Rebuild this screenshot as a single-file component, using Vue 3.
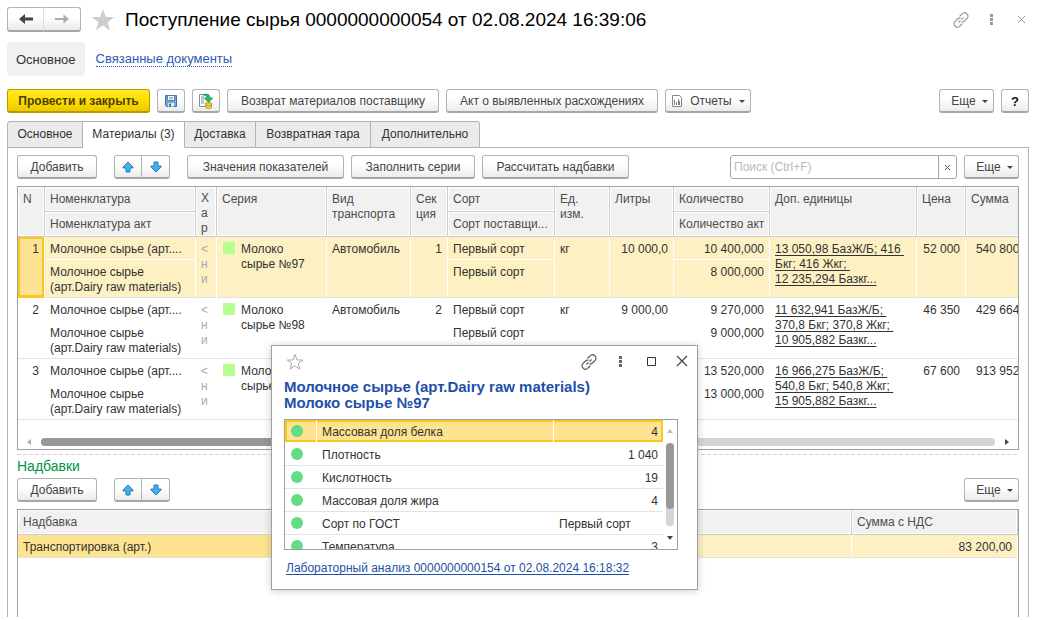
<script setup>
import { ref } from 'vue'

const activeTab = ref(1)
const search = ref('')
const tabs = ['Основное', 'Материалы (3)', 'Доставка', 'Возвратная тара', 'Дополнительно']

const materials = [
  {
    n: 1, short: 'Молочное сырье (арт....', series: 'Молоко сырье №97', section: 1,
    litres: '10 000,0', qty: '10 400,000', qtyAct: '8 000,000',
    extra: ['13 050,98 БазЖ/Б; 416', 'Бкг; 416 Жкг;', '12 235,294 Базкг...'],
    price: '52 000', sum: '540 800,00'
  },
  {
    n: 2, short: 'Молочное сырье (арт....', series: 'Молоко сырье №98', section: 2,
    litres: '9 000,00', qty: '9 270,000', qtyAct: '9 000,000',
    extra: ['11 632,941 БазЖ/Б;', '370,8 Бкг; 370,8 Жкг;', '10 905,882 Базкг...'],
    price: '46 350', sum: '429 664,50'
  },
  {
    n: 3, short: 'Молочное сырье (арт....', series: 'Молоко сырье №99', section: 3,
    litres: '13 000,0', qty: '13 520,000', qtyAct: '13 000,000',
    extra: ['16 966,275 БазЖ/Б;', '540,8 Бкг; 540,8 Жкг;', '15 905,882 Базкг...'],
    price: '67 600', sum: '913 952,00'
  }
]

const analysis = [
  { name: 'Массовая доля белка', value: '4' },
  { name: 'Плотность', value: '1 040' },
  { name: 'Кислотность', value: '19' },
  { name: 'Массовая доля жира', value: '4' },
  { name: 'Сорт по ГОСТ', value: 'Первый сорт', text: true },
  { name: 'Температура', value: '3' }
]
</script>

<template>
  <main class="app">
    <header class="title-row">
      <div class="pair nav">
        <button class="btn" aria-label="Назад">
          <svg width="16" height="12" viewBox="0 0 16 12"><path d="M1 6 7 1v3.500h8v3H7V11z" fill="#444" /></svg>
        </button>
        <button class="btn" aria-label="Вперед">
          <svg width="16" height="12" viewBox="0 0 16 12"><path d="M15 6 9.500 1.500v3.500H1v2h8.500v3.500z" fill="#aaa" /></svg>
        </button>
      </div>
      <button class="icon star" aria-label="В избранное">
        <svg width="24" height="24" viewBox="0 0 24 24"><path d="m12 1 2.800 8H23.500l-7 5.200L19.200 22.500 12 17.400 4.800 22.500l2.700-8.300-7-5.200H9.200z" fill="#cbcdcf" /></svg>
      </button>
      <h1>Поступление сырья 0000000000054 от 02.08.2024 16:39:06</h1>
      <div class="window-tools">
        <button class="icon" aria-label="Ссылка">
          <svg width="16" height="16" viewBox="0 0 16 16" fill="none" stroke="#999" stroke-width="1.100"><path d="M6.500 4.500 9 2a3.200 3.200 0 0 1 5 4.500L11.500 9a3.200 3.200 0 0 1-3 .800M9.500 11.500 7 14a3.200 3.200 0 0 1-5-4.500L4.500 7a3.200 3.200 0 0 1 3-.800M5.500 10.500l2-2M8.500 7.500l2-2" /></svg>
        </button>
        <button class="icon" aria-label="Меню">
          <svg width="16" height="16" viewBox="0 0 16 16" fill="#999"><path d="M7 2h3v3H7zM7 6h3v3H7zM7 10h3v3H7z" /></svg>
        </button>
        <button class="icon" aria-label="Закрыть">
          <svg width="16" height="16" viewBox="0 0 16 16" stroke="#999"><path d="m5 4 7 7m0-7-7 7" /></svg>
        </button>
      </div>
    </header>

    <nav class="sections">
      <a href="#" class="current">Основное</a>
      <a href="#" class="related">Связанные документы</a>
    </nav>

    <div class="bar commands">
      <button class="btn primary">Провести и закрыть</button>
      <button class="btn square" aria-label="Записать">
        <svg width="14" height="14" viewBox="0 0 14 14"><path d="M1.500 1.500h11v11h-10l-1-1z" fill="#78a8d8" stroke="#3c6e9f" /><path d="M3.500 1.500h7v5h-7z" fill="#fff" stroke="#5584b2" /><path d="M5 3.500h4M5 5h4" stroke="#88a" stroke-width=".800" /><path d="M4 9h6v3.500H4z" fill="#e9f1f8" /><path d="M5 9.500h2v3H5z" fill="#3c6e9f" /></svg>
      </button>
      <button class="btn square" aria-label="Провести">
        <svg width="16" height="16" viewBox="0 0 16 16"><path d="M1.500 1.500h9v12h-9z" fill="#fff" stroke="#7893a8" /><path d="M3 4h3M3 6h3M3 8h3M3 10h3" stroke="#7893a8" /><path d="M7.500 10h6v4.500c-2 1.300-4 1.300-6 0z" fill="#f1cf4b" stroke="#c59c22" /><path d="M7.500 12c2 1 4 1 6 0" stroke="#c59c22" fill="none" /><path d="M5 2c4-2 7 0 7 3h2.500L10.500 9.500 6.500 5H9c0-2-2-3-4-3z" fill="#22c36a" stroke="#109448" stroke-width=".800" /></svg>
      </button>
      <button class="btn wide">Возврат материалов поставщику</button>
      <button class="btn wide">Акт о выявленных расхождениях</button>
      <button class="btn reports">
        <svg width="12" height="14" viewBox="0 0 12 14"><path d="M1.500 1.500h7l2 2v9h-9z" fill="#fff" stroke="#7b8b99" /><path d="M3.500 6v5" stroke="#d55" /><path d="M5.500 8v3" stroke="#48a" /><path d="M7.500 5v6" stroke="#d55" /><path d="M8.500 7v4" stroke="#4a4" /></svg>
        Отчеты <i class="caret"></i>
      </button>
      <span class="spring"></span>
      <button class="btn more">Еще <i class="caret"></i></button>
      <button class="btn square help">?</button>
    </div>

    <div class="tabs" role="tablist">
      <button v-for="(t, i) in tabs" :key="t" role="tab" :aria-selected="i === activeTab" :class="{ active: i === activeTab }" @click="activeTab = i">{{ t }}</button>
    </div>

    <section class="panel">
      <div class="bar">
        <button class="btn add">Добавить</button>
        <div class="pair arrows">
          <button class="btn" aria-label="Вверх"><svg width="12" height="12" viewBox="0 0 12 12"><path d="M6 1 1 6v1h3v4h4V7h3V6z" fill="#41b0f0" stroke="#2a7cb8" /></svg></button>
          <button class="btn" aria-label="Вниз"><svg width="12" height="12" viewBox="0 0 12 12"><path d="m6 11 5-5V5H8V1H4v4H1v1z" fill="#41b0f0" stroke="#2a7cb8" /></svg></button>
        </div>
        <button class="btn values">Значения показателей</button>
        <button class="btn fill">Заполнить серии</button>
        <button class="btn calc">Рассчитать надбавки</button>
        <span class="spring"></span>
        <div class="search">
          <input v-model="search" type="text" aria-label="Поиск" placeholder="Поиск (Ctrl+F)" />
          <button aria-label="Очистить" @click="search = ''"><svg width="7" height="7" viewBox="0 0 7 7" stroke="#555"><path d="m1 1 5 5m0-5-5 5" /></svg></button>
        </div>
        <button class="btn more">Еще <i class="caret"></i></button>
      </div>

      <div class="grid-box">
        <table class="materials">
          <colgroup>
            <col class="c-n" /><col class="c-name" /><col class="c-char" /><col class="c-series" /><col class="c-transport" />
            <col class="c-section" /><col class="c-grade" /><col class="c-unit" /><col class="c-litres" /><col class="c-qty" />
            <col /><col class="c-price" /><col class="c-sum" />
          </colgroup>
          <thead>
            <tr>
              <th rowspan="2">N</th><th>Номенклатура</th><th rowspan="2" class="char">Хар</th><th rowspan="2">Серия</th>
              <th rowspan="2">Вид транспорта</th><th rowspan="2">Сек<br />ция</th><th>Сорт</th><th rowspan="2">Ед.<br />изм.</th>
              <th rowspan="2">Литры</th><th>Количество</th><th rowspan="2">Доп. единицы</th><th rowspan="2">Цена</th><th rowspan="2">Сумма</th>
            </tr>
            <tr><th>Номенклатура акт</th><th class="tight">Сорт поставщи...</th><th class="tight">Количество акт</th></tr>
          </thead>
          <tbody v-for="m in materials" :key="m.n" :class="{ selected: m.n === 1 }">
            <tr>
              <td rowspan="2" class="num focus">{{ m.n }}</td>
              <td class="top">{{ m.short }}</td>
              <td rowspan="2" class="char">&lt;ни</td>
              <td rowspan="2"><div class="series"><i></i><span>{{ m.series }}</span></div></td>
              <td rowspan="2">Автомобиль</td>
              <td rowspan="2" class="num">{{ m.section }}</td>
              <td class="top">Первый сорт</td>
              <td rowspan="2">кг</td>
              <td rowspan="2" class="num">{{ m.litres }}</td>
              <td class="num top">{{ m.qty }}</td>
              <td rowspan="2" class="extra"><a href="#"><template v-for="(e, i) in m.extra" :key="e"><br v-if="i" />{{ e }}{{ i < 2 ? '\u00a0' : '' }}</template></a></td>
              <td rowspan="2" class="num">{{ m.price }}</td>
              <td rowspan="2" class="num">{{ m.sum }}</td>
            </tr>
            <tr>
              <td>Молочное сырье (арт.Dairy raw materials)</td>
              <td>Первый сорт</td>
              <td class="num">{{ m.qtyAct }}</td>
            </tr>
          </tbody>
        </table>
        <div class="hscroll">
          <svg width="4" height="6" viewBox="0 0 4 6"><path d="M4 0v6L0 3z" fill="#aaa" /></svg>
          <div class="track"><div class="thumb"></div></div>
          <svg width="4" height="6" viewBox="0 0 4 6"><path d="M0 0v6l4-3z" fill="#444" /></svg>
        </div>
      </div>

      <div class="divider"></div>
      <h2>Надбавки</h2>
      <div class="bar">
        <button class="btn add">Добавить</button>
        <div class="pair arrows">
          <button class="btn" aria-label="Вверх"><svg width="12" height="12" viewBox="0 0 12 12"><path d="M6 1 1 6v1h3v4h4V7h3V6z" fill="#41b0f0" stroke="#2a7cb8" /></svg></button>
          <button class="btn" aria-label="Вниз"><svg width="12" height="12" viewBox="0 0 12 12"><path d="m6 11 5-5V5H8V1H4v4H1v1z" fill="#41b0f0" stroke="#2a7cb8" /></svg></button>
        </div>
        <span class="spring"></span>
        <button class="btn more">Еще <i class="caret"></i></button>
      </div>
      <div class="grid-box extras-box">
        <table class="extras">
          <colgroup><col class="c-half" /><col /><col class="c-total" /></colgroup>
          <thead><tr><th>Надбавка</th><th></th><th>Сумма с НДС</th></tr></thead>
          <tbody><tr><td class="picked">Транспортировка (арт.)</td><td></td><td class="num">83 200,00</td></tr></tbody>
        </table>
      </div>
    </section>

    <aside class="popup" role="dialog" aria-label="Показатели">
      <div class="popup-head">
        <button class="icon" aria-label="В избранное">
          <svg width="18" height="18" viewBox="0 0 18 18"><path d="m9 1.500 2 5.500h5.700L12.200 10.500l1.700 5.700L9 12.800l-4.900 3.400 1.700-5.700L1.300 7H7z" fill="#fff" stroke="#aaa" /></svg>
        </button>
        <span class="spring"></span>
        <button class="icon" aria-label="Ссылка">
          <svg width="16" height="16" viewBox="0 0 16 16" fill="none" stroke="#555" stroke-width="1.100"><path d="M6.500 4.500 9 2a3.200 3.200 0 0 1 5 4.500L11.500 9a3.200 3.200 0 0 1-3 .800M9.500 11.500 7 14a3.200 3.200 0 0 1-5-4.500L4.500 7a3.200 3.200 0 0 1 3-.800M5.500 10.500l2-2M8.500 7.500l2-2" /></svg>
        </button>
        <button class="icon" aria-label="Меню">
          <svg width="16" height="16" viewBox="0 0 16 16" fill="#666"><path d="M7 2h3v3H7zM7 6h3v3H7zM7 10h3v3H7z" /></svg>
        </button>
        <button class="icon" aria-label="Развернуть">
          <svg width="16" height="16" viewBox="0 0 16 16" fill="none" stroke="#333"><path d="M4.500 3.500h8v8h-8z" /></svg>
        </button>
        <button class="icon" aria-label="Закрыть">
          <svg width="16" height="16" viewBox="0 0 16 16" stroke="#444" stroke-width="1.200"><path d="m3 2 10 10m0-10L3 12" /></svg>
        </button>
      </div>
      <h3>Молочное сырье (арт.Dairy raw materials)<br />Молоко сырье №97</h3>
      <div class="analysis-box">
        <table class="analysis">
          <colgroup><col class="c-dot" /><col /><col class="c-value" /></colgroup>
          <tbody>
            <tr v-for="(a, i) in analysis" :key="a.name" :class="{ chosen: i === 0 }">
              <td class="dot"><i></i></td>
              <td>{{ a.name }}</td>
              <td :class="{ num: !a.text }">{{ a.value }}</td>
            </tr>
          </tbody>
        </table>
        <div class="vscroll">
          <svg width="6" height="4" viewBox="0 0 6 4"><path d="M0 4h6L3 0z" fill="#bbb" /></svg>
          <div class="track"><div class="thumb"></div></div>
          <svg width="6" height="4" viewBox="0 0 6 4"><path d="M0 0h6L3 4z" fill="#444" /></svg>
        </div>
      </div>
      <a href="#" class="source">Лабораторный анализ 0000000000154 от 02.08.2024 16:18:32</a>
    </aside>
  </main>
</template>

<style>
body { margin: 0; background: #fff; }
</style>

<style scoped>
* { box-sizing: border-box; }
.app { position: relative; display: flex; flex-direction: column; height: 100vh; min-height: 600px; padding: 7px 8px 3px 7px; overflow: hidden; color: #333; font: 12px/15px "Liberation Sans", Arial, sans-serif; }
button, input { font: inherit; color: inherit; }
svg { display: block; flex: none; }
.spring { flex: 1; }
.icon { display: flex; padding: 0; border: 0; background: none; }

.btn { display: flex; align-items: center; justify-content: center; height: 24px; padding: 1px 0 0; border: 1px solid #b3b3b3; border-bottom: 2px solid #a6a6a6; border-radius: 3px; background: linear-gradient(#fff 40%, #ebebeb); color: #444; white-space: nowrap; }
.square { width: 28px; }
.primary { width: 143px; border-color: #b39b00; background: linear-gradient(#ffea28, #ffe000 45%, #edc900); color: #4a4000; font-weight: bold; }
.help { color: #111; font-size: 13px; font-weight: bold; }
.wide { width: 212px; }
.values { width: 157px; }
.fill { width: 124px; }
.calc { width: 147px; }
.more { width: 55px; padding-left: 6px; gap: 6px; }
.reports { width: 86px; gap: 7px; }
.add { width: 80px; }
.caret { width: 0; height: 0; border: 3px solid transparent; border-top-color: #444; border-bottom: 0; }
.pair { display: flex; }
.pair .btn { width: 28px; padding: 0; }
.pair .btn:first-child { border-radius: 3px 0 0 3px; }
.pair .btn:last-child { margin-left: -1px; border-radius: 0 3px 3px 0; }
.nav .btn { width: 37px; height: 25px; }
.nav .btn:last-child { width: 38px; border-left-color: #ddd; }
.arrows { width: 56px; margin: 0 10px; }
.arrows .btn:last-child { width: 29px; }

.title-row { display: flex; align-items: center; height: 25px; }
.star { margin: 0 10px; }
h1 { margin: 0; color: #000; font-size: 19px; line-height: 24px; font-weight: normal; white-space: nowrap; }
.window-tools { display: flex; gap: 14px; margin-left: auto; }

.sections { display: flex; align-items: center; gap: 11px; height: 34px; margin-top: 10px; font-size: 13px; }
.current { display: flex; align-items: center; height: 34px; padding: 0 9px; border-radius: 4px; background: #f1f1f1; color: #333; text-decoration: none; }
.related { border-bottom: 1px dotted #2a5db0; color: #2a5db0; line-height: 14px; text-decoration: none; }

.bar { display: flex; gap: 7px; }
.commands { margin-top: 13px; }

.tabs { display: flex; margin-top: 8px; position: relative; }
.tabs button { height: 27px; padding: 0 8px; border: 1px solid #b3b3b3; border-left-width: 0; background: #ebebeb; white-space: nowrap; }
.tabs button:first-child { width: 76px; border-left-width: 1px; border-radius: 3px 0 0; }
.tabs button:nth-child(2) { width: 102px; }
.tabs button:nth-child(3) { width: 71px; }
.tabs button:nth-child(4) { width: 115px; }
.tabs button:last-child { width: 109px; border-radius: 0 3px 0 0; }
.tabs .active { border-bottom-color: #fff; background: #fff; }

.panel { display: flex; flex: 1; flex-direction: column; min-height: 0; margin-top: -1px; padding: 7px 9px 0; border: 1px solid #b3b3b3; border-bottom: 0; }

.search { display: flex; width: 227px; height: 24px; border: 1px solid #a6a6a6; border-radius: 3px; }
.search input { flex: 1; min-width: 0; padding: 0 3px; border: 0; background: none; outline: 0; }
.search input::placeholder { color: #bbb; opacity: 1; }
.search button { display: flex; align-items: center; justify-content: center; width: 18px; padding: 0; border: 0; border-left: 1px solid #a6a6a6; background: none; }

.grid-box { flex: none; margin-top: 7px; border: 1px solid #a0a0a0; overflow: hidden; }
table { border-collapse: separate; border-spacing: 0; table-layout: fixed; }
th, td { padding: 5px 5px 2px; text-align: left; vertical-align: top; font-weight: normal; }
th { border-right: 1px solid #ccc; border-bottom: 1px solid #ccc; background: #f1f1f1; box-shadow: inset 0 0 0 1px #fff; color: #4d4d4d; }
th.char { padding-top: 4px; padding-bottom: 0; }
.num { text-align: right; white-space: nowrap; }
.tight { padding-right: 3px; white-space: nowrap; }

.materials { width: calc(100% + 24px); }
.materials thead tr { height: 25px; }
.materials tbody tr:first-child { height: 23px; }
.materials tbody tr:last-child { height: 38px; }
.c-n { width: 27px; }
.c-name { width: 151px; }
.c-char { width: 21px; }
.c-series { width: 110px; }
.c-transport { width: 84px; }
.c-section { width: 37px; }
.c-grade { width: 107px; }
.c-unit { width: 55px; }
.c-litres { width: 64px; }
.c-qty { width: 96px; }
.c-price { width: 49px; }
.c-sum { width: 76px; }
.materials td { border-right: 1px solid #fff; border-bottom: 1px solid #e2e2e2; }
.materials .top { border-bottom-color: #fff; white-space: nowrap; }
.materials .char { word-break: break-all; }
.materials td.char { color: #aaa; }
.selected td { background: #fdf0c3; }
.selected .focus { border-bottom-color: #fac71e; background: #fee390; box-shadow: inset 0 0 0 2px #fac71e; }
.series { display: flex; gap: 6px; padding-right: 10px; }
.series i { flex: none; width: 12px; height: 12px; margin-left: 1px; background: #b3ff8f; }
.extra { white-space: nowrap; }
.extra a { color: #333; text-underline-offset: 2px; }

.hscroll { display: flex; align-items: center; gap: 10px; height: 29px; padding: 14px 9px 0 9px; }
.track { flex: 1; border-radius: 4px; background: #d5d5d5; }
.hscroll .track { height: 8px; }
.thumb { border-radius: 4px; background: #999; }
.hscroll .thumb { width: 60%; height: 8px; }

.divider { height: 1px; margin-top: 4px; background: repeating-linear-gradient(90deg, #d5d5d5 0 4px, transparent 4px 6px); }
h2 { margin: 3px 0 4px; color: #009646; font-size: 14px; line-height: 16px; font-weight: normal; }

.extras-box { flex: 1; min-height: 0; border-bottom: 0; }
.extras { width: 100%; }
.extras th { height: 25px; }
.extras td { height: 23px; border-right: 1px solid #fff; border-bottom: 1px solid #e2e2e2; background: #fdf0c3; }
.extras .picked { background: #fee390; }
.c-half { width: 50%; }
.c-total { width: 166px; }

.popup { position: absolute; left: 271px; top: 345px; width: 427px; padding: 7px 12px 13px; border: 1px solid #a0a0a0; background: #fff; box-shadow: 0 1px 8px rgba(0, 0, 0, .2); }
.popup-head { display: flex; align-items: center; gap: 15px; height: 18px; margin-left: 2px; margin-right: -5px; }
h3 { margin: 8px 0; color: #1d50a8; font-size: 15px; line-height: 16px; font-weight: bold; white-space: nowrap; }
.analysis-box { display: flex; width: 394px; height: 131px; border: 1px solid #a0a0a0; overflow: hidden; }
.analysis { flex: 1; align-self: flex-start; width: 378px; }
.analysis tr { height: 23px; }
.analysis td { border-bottom: 1px solid #e2e2e2; }
.c-dot { width: 32px; }
.c-value { width: 109px; }
.dot i { display: block; width: 12px; height: 12px; margin: 0 1px; border-radius: 50%; background: #63dc86; }
.analysis .chosen td { border-right: 1px solid #fff; border-bottom-color: #fff; background: #fee390; box-shadow: inset 0 2px #fac71e, inset 0 -2px #fac71e; }
.analysis .chosen td:first-child { box-shadow: inset 2px 2px #fac71e, inset 0 -2px #fac71e; }
.analysis .chosen td:last-child { border-right: 0; box-shadow: inset 0 2px #fac71e, inset -2px -2px #fac71e; }
.vscroll { display: flex; flex-direction: column; align-items: center; gap: 10px; width: 14px; padding: 9px 0; }
.vscroll .track { width: 8px; }
.vscroll .thumb { height: 66px; }
.source { display: inline-block; margin: 11px 0 0 2px; color: #1d50a8; text-underline-offset: 2px; }
</style>
